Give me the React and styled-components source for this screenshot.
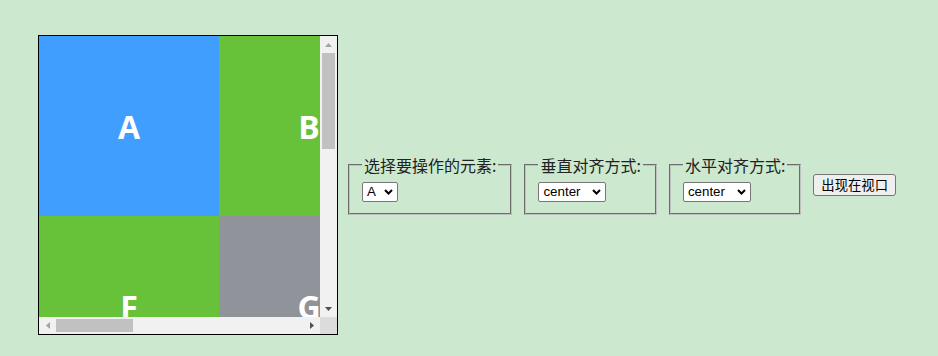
import React from "react";
import styled, { createGlobalStyle } from "styled-components";

const GlobalStyle = createGlobalStyle`
  html, body { margin: 0; padding: 0; background: #cce8cf; }
  body { font-family: "Microsoft YaHei", "Noto Sans CJK SC", "Noto Sans", sans-serif; color: #222; }
`;

const Page = styled.div`
  display: flex;
  align-items: center;
  padding: 35px 0 0 38px;
`;

const ScrollBox = styled.div`
  width: 298px;
  height: 298px;
  border: 1px solid #000;
  margin-right: 10px;
  flex-shrink: 0;
  display: grid;
  grid-template-columns: 281px 17px;
  grid-template-rows: 281px 17px;
  background: #f1f1f1;
`;

const Viewport = styled.div`
  overflow: hidden;
`;

const Grid = styled.div`
  width: 900px;
  display: flex;
  flex-wrap: wrap;
`;

const Cell = styled.div`
  width: 180px;
  height: 180px;
  display: flex;
  align-items: center;
  justify-content: center;
  background: ${(p) => p.$bg};
  color: #fff;
  font-family: "Open Sans", "Noto Sans", sans-serif;
  font-weight: 700;
  font-size: 32px;
`;

const Scrollbar = styled.div`
  display: flex;
  flex-direction: ${(p) => (p.$vertical ? "column" : "row")};
  background: #f1f1f1;
`;

const ArrowButton = styled.div`
  width: 17px;
  height: 17px;
  flex-shrink: 0;
  display: flex;
  align-items: center;
  justify-content: center;
`;

const Track = styled.div`
  flex: 1;
  display: flex;
  flex-direction: ${(p) => (p.$vertical ? "column" : "row")};
  padding: ${(p) => (p.$vertical ? "0 2px" : "2px 0")};
`;

const Thumb = styled.div`
  background: #c1c1c1;
  flex: 0 0 ${(p) => p.$len}px;
`;

const Corner = styled.div`
  background: #dcdcdc;
`;

const Controls = styled.div`
  display: flex;
  align-items: center;
  gap: 12px;
`;

const Field = styled.fieldset`
  margin: 0;
  border: 2px groove rgb(192, 192, 192);
  padding: 7px 12px 11px;
`;

const Legend = styled.legend`
  padding: 0 2px;
  font-size: 16px;
  line-height: 20px;
  color: #222;
`;

const SelectWrap = styled.div`
  position: relative;
  display: flex;
  width: ${(p) => p.$w}px;
  height: 20px;
`;

const Select = styled.select`
  appearance: none;
  -webkit-appearance: none;
  display: block;
  width: 100%;
  height: 20px;
  box-sizing: border-box;
  margin: 0;
  padding: 0 0 0 4px;
  border: 1px solid #767676;
  border-radius: 2px;
  background: #fff;
  color: #000;
  font-family: "Liberation Sans", Arial, sans-serif;
  font-size: 13.33px;
  line-height: 18px;
  outline: none;
`;

const Chevron = styled.svg`
  position: absolute;
  right: 5px;
  top: 7px;
  width: 9px;
  height: 6px;
  pointer-events: none;
`;

const Button = styled.button`
  height: 22px;
  box-sizing: border-box;
  margin: 0;
  padding: 0 7px;
  border: 1px solid #767676;
  border-radius: 3px;
  background: #efefef;
  color: #000;
  font-family: "Microsoft YaHei", "Noto Sans CJK SC", sans-serif;
  font-size: 13.33px;
  line-height: 18px;
`;

const COLORS = ["#409eff", "#67c23a", "#909399", "#e6a23c"];
const LETTERS = "ABCDEFGHIJKLMNOPQRST".split("");
const ALIGN = ["start", "center", "end", "nearest"];

const ARROWS = {
  up: { w: 7, h: 4, pts: "3.5,0 7,4 0,4" },
  down: { w: 7, h: 4, pts: "0,0 7,0 3.5,4" },
  left: { w: 4, h: 7, pts: "4,0 4,7 0,3.5" },
  right: { w: 4, h: 7, pts: "0,0 4,3.5 0,7" },
};

function Arrow({ dir, color }) {
  const a = ARROWS[dir];
  return (
    <ArrowButton>
      <svg width={a.w} height={a.h} viewBox={`0 0 ${a.w} ${a.h}`}>
        <polygon points={a.pts} fill={color} />
      </svg>
    </ArrowButton>
  );
}

function DropDown({ width, options, defaultValue }) {
  return (
    <SelectWrap $w={width}>
      <Select defaultValue={defaultValue}>
        {options.map((o) => (
          <option key={o} value={o}>{o}</option>
        ))}
      </Select>
      <Chevron viewBox="0 0 9 6">
        <path d="M1 1 L4.5 4.5 L8 1" fill="none" stroke="#000" strokeWidth="2" />
      </Chevron>
    </SelectWrap>
  );
}

export default function App() {
  const view = 281;
  const track = view - 34;
  const vThumb = Math.round((track * view) / 720);
  const hThumb = Math.round((track * view) / 900);
  return (
    <>
      <GlobalStyle />
      <Page>
        <ScrollBox>
          <Viewport>
            <Grid>
              {LETTERS.map((l, i) => (
                <Cell key={l} $bg={COLORS[i % 4]}>{l}</Cell>
              ))}
            </Grid>
          </Viewport>
          <Scrollbar $vertical>
            <Arrow dir="up" color="#a3a3a3" />
            <Track $vertical>
              <Thumb $len={vThumb} />
            </Track>
            <Arrow dir="down" color="#505050" />
          </Scrollbar>
          <Scrollbar>
            <Arrow dir="left" color="#a3a3a3" />
            <Track>
              <Thumb $len={hThumb} />
            </Track>
            <Arrow dir="right" color="#505050" />
          </Scrollbar>
          <Corner />
        </ScrollBox>
        <Controls>
          <Field>
            <Legend>选择要操作的元素:</Legend>
            <DropDown width={36} options={LETTERS} defaultValue="A" />
          </Field>
          <Field>
            <Legend>垂直对齐方式:</Legend>
            <DropDown width={68} options={ALIGN} defaultValue="center" />
          </Field>
          <Field>
            <Legend>水平对齐方式:</Legend>
            <DropDown width={68} options={ALIGN} defaultValue="center" />
          </Field>
          <Button>出现在视口</Button>
        </Controls>
      </Page>
    </>
  );
}
